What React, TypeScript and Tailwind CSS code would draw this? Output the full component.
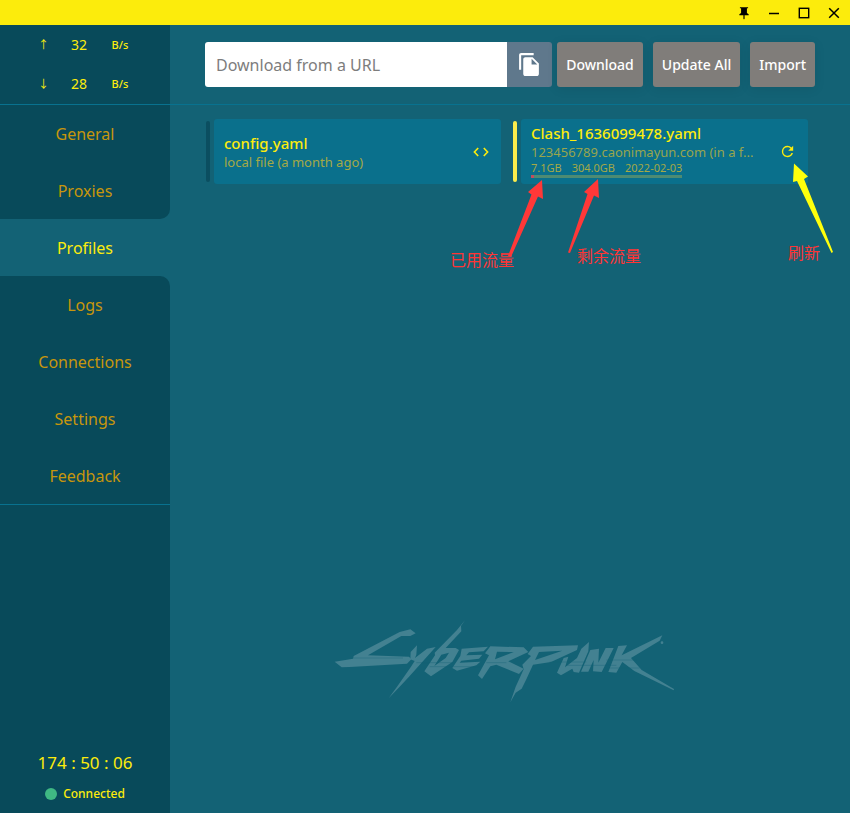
import { useState } from "react";
import type { ReactNode } from "react";
import clsx from "clsx";

const navItems = ["General", "Proxies", "Profiles", "Logs", "Connections", "Settings", "Feedback"];

function TitleBar() {
  return (
    <header className="flex h-[25px] shrink-0 items-center justify-end bg-[#fcec0c] pr-px text-black">
      <button type="button" aria-label="Pin window" className="flex h-full w-[30px] items-center justify-center">
        <svg width="14" height="14" viewBox="0 0 24 24" fill="currentColor" aria-hidden="true">
          <path d="M17 4h2V2H5v2h2v8l-3 2v2h7v6l1 1 1-1v-6h7v-2l-3-2V4z" />
        </svg>
      </button>
      <button type="button" aria-label="Minimize" className="flex h-full w-[30px] items-center justify-center">
        <svg width="12" height="12" viewBox="0 0 12 12" stroke="currentColor" strokeWidth="1.5" aria-hidden="true">
          <path d="M1 6.500h10" />
        </svg>
      </button>
      <button type="button" aria-label="Maximize" className="flex h-full w-[30px] items-center justify-center">
        <svg width="12" height="12" viewBox="0 0 12 12" fill="none" stroke="currentColor" strokeWidth="1.4" aria-hidden="true">
          <rect x="1.3" y="1.3" width="9.4" height="9.4" />
        </svg>
      </button>
      <button type="button" aria-label="Close" className="flex h-full w-[30px] items-center justify-center">
        <svg width="12" height="12" viewBox="0 0 12 12" fill="none" stroke="currentColor" strokeWidth="1.5" aria-hidden="true">
          <path d="M1.200 1.200l9.600 9.600M10.800 1.200l-9.600 9.600" />
        </svg>
      </button>
    </header>
  );
}

function Speed({ arrow, value }: { arrow: string; value: string }) {
  return (
    <div className="flex flex-1 items-center pl-9 text-[#fcec0c]">
      <span className="w-[15px] text-center text-[11px]">{arrow}</span>
      <span className="w-14 text-center text-sm">{value}</span>
      <span className="w-[26px] text-center text-[11px] font-medium">B/s</span>
    </div>
  );
}

function Sidebar({ active, onSelect }: { active: string; onSelect: (name: string) => void }) {
  const activeIndex = navItems.indexOf(active);
  return (
    <aside className="flex w-[170px] shrink-0 flex-col">
      <div className="flex h-20 flex-col border-b border-[#08728f] bg-[#084a5a]">
        <Speed arrow="↑" value="32" />
        <Speed arrow="↓" value="28" />
      </div>
      <nav className="flex flex-col border-b border-[#08728f]">
        {navItems.map((name, i) => (
          <button
            key={name}
            type="button"
            onClick={() => onSelect(name)}
            className={clsx(
              "h-[57px] text-center text-base",
              name === active ? "text-[#fcec0c]" : "bg-[#084a5a] text-[#c7960c]",
              i === activeIndex - 1 && "rounded-br-[10px]",
              i === activeIndex + 1 && "rounded-tr-[10px]",
            )}
          >
            {name}
          </button>
        ))}
      </nav>
      <div className="flex flex-1 flex-col items-center justify-end bg-[#084a5a] pb-[7px] text-[#fcec0c]">
        <div className="text-[17px] leading-9">174 : 50 : 06</div>
        <div className="flex h-[25px] items-center gap-1.5 text-xs font-medium">
          <span className="size-3 rounded-full bg-[#3fb883]" />
          Connected
        </div>
      </div>
    </aside>
  );
}

function ToolButton({ children }: { children: ReactNode }) {
  return (
    <button
      type="button"
      className="h-[45px] whitespace-nowrap rounded-[3px] bg-[#807d7a] px-[9px] text-sm font-medium text-white shadow-[0_2px_12px_rgba(0,0,0,0.08)]"
    >
      {children}
    </button>
  );
}

function Toolbar() {
  return (
    <div className="flex h-20 shrink-0 items-center border-b border-[#08728f] px-[35px]">
      <input
        type="text"
        aria-label="Download from a URL"
        placeholder="Download from a URL"
        className="h-[45px] min-w-0 flex-1 rounded-l-[3px] bg-white px-[11px] text-base text-gray-700 outline-none placeholder:text-[#7d7d7d]"
      />
      <button
        type="button"
        aria-label="Paste URL"
        className="mr-[5px] flex h-[45px] w-[45px] items-center justify-center rounded-r-[3px] bg-[#5f788c] text-white"
      >
        <svg width="25" height="25" viewBox="0 0 24 24" fill="currentColor" aria-hidden="true">
          <path d="M16 1H4c-1.100 0-2 .9-2 2v14h2V3h12V1zm-1 4l6 6v10c0 1.100-.9 2-2 2H7.990C6.890 23 6 22.100 6 21l.01-14c0-1.100.89-2 1.990-2h7zm-1 7h5.500L14 6.500V12z" />
        </svg>
      </button>
      <div className="flex gap-2.5">
        <ToolButton>Download</ToolButton>
        <ToolButton>Update All</ToolButton>
        <ToolButton>Import</ToolButton>
      </div>
    </div>
  );
}

function ProfileCard({ selected, children, action }: { selected?: boolean; children: ReactNode; action: ReactNode }) {
  return (
    <article className="flex min-w-0 items-center gap-1">
      <span className={clsx("h-[61px] w-1 shrink-0 rounded-sm", selected ? "bg-[#fcec4c]" : "bg-[#0b4e60]")} />
      <div className="flex h-[65px] min-w-0 flex-1 items-center justify-between rounded-[3px] bg-[#0a708c] pl-2.5 pr-3">
        <div className={clsx("min-w-0", selected ? "pb-0.5" : "pt-0.5")}>{children}</div>
        {action}
      </div>
    </article>
  );
}

function Profiles() {
  return (
    <div className="grid grid-cols-2 gap-3 pl-9 pr-[42px] pt-3.5">
      <ProfileCard
        action={
          <button type="button" aria-label="Edit config.yaml" className="text-[#fcec0c]">
            <svg width="16" height="16" viewBox="0 0 16 16" fill="none" stroke="currentColor" strokeWidth="1.6" aria-hidden="true">
              <path d="M5.200 4L1.400 8l3.800 4M10.800 4l3.800 4-3.800 4" />
            </svg>
          </button>
        }
      >
        <h2 className="text-[15px] font-medium leading-[19px] text-[#fcec0c]">config.yaml</h2>
        <p className="text-[13px] leading-[18px] text-[#a5a946]">local file (a month ago)</p>
      </ProfileCard>
      <ProfileCard
        selected
        action={
          <button type="button" aria-label="Refresh profile" className="text-[#fcec0c]">
            <svg width="17" height="17" viewBox="0 0 24 24" fill="currentColor" aria-hidden="true">
              <path d="M17.650 6.350A7.960 7.960 0 0 0 12 4a8 8 0 1 0 7.730 10h-2.080A6 6 0 1 1 12 6c1.660 0 3.140.69 4.220 1.780L13 11h7V4l-2.350 2.350z" />
            </svg>
          </button>
        }
      >
        <h2 className="truncate text-[15px] font-medium leading-[19px] text-[#fcec0c]">Clash_1636099478.yaml</h2>
        <p className="whitespace-nowrap text-[13px] leading-[18px] text-[#99a54c]">123456789.caonimayun.com (in a f...</p>
        <div className="w-fit">
          <div className="flex gap-2.5 text-[11px] leading-[14px] text-[#a5a946]">
            <span>7.1GB</span>
            <span>304.0GB</span>
            <span>2022-02-03</span>
          </div>
          <div className="h-[3px] bg-[#4d8b73]">
            <div className="h-full w-[3px] bg-[#c04d60]" />
          </div>
        </div>
      </ProfileCard>
    </div>
  );
}

function Annotations() {
  return (
    <div className="pointer-events-none absolute left-[280px] top-[130px] h-[120px] w-[400px] text-base leading-6 text-[#ff3535]">
      <svg className="absolute left-0 top-0" width="400" height="120" viewBox="450 155 400 120" aria-hidden="true">
        <path fill="#ff3838" d="M542 180L543 199L538 196.500L511 257L508 256L531.500 194.500L528 192Z" />
        <path fill="#ff3838" d="M598 179L599 198L594 195.500L570 253L568 252.500L587.500 194L584 192Z" />
        <path fill="#ffff0c" d="M794 163.500L808 176.500L804 179L833 252L831.500 253L797 181L793 182Z" />
      </svg>
      <span className="absolute left-0 top-[93px]">已用流量</span>
      <span className="absolute left-[127px] top-[89px]">剩余流量</span>
      <span className="absolute left-[338px] top-[86px]">刷新</span>
    </div>
  );
}

function Logo() {
  return (
    <svg width="346" height="90" viewBox="40 20 1038 270" fill="#438191" fillRule="evenodd" role="img" aria-label="Cyberpunk" className="shrink-0">
      <path d="M102 140L240 68L272 60L288 72L272 80L245 80L145 138L268 142L275 150L262 163L90 173L66 174L45 157L100 148Z" />
      <path d="M273 128L292 108L290 136L286 146L322 118L348 113L268 202L240 232L207 267L232 232L274 172L285 155L272 150Z" />
      <path d="M437 31L424 50L425 66L378 116L408 116L418 122L398 158L334 201L314 186L346 138L345 130L412 62ZM365 136L388 130L378 146L344 170Z" />
      <path d="M426 118L505 112L492 126L448 129L440 138L488 136L478 148L425 154L420 160L482 157L470 168L412 184L398 176L422 140Z" />
      <path d="M512 111L612 114L626 128L566 156L612 178L598 194L530 166L512 171L487 209L475 198L508 138L496 132ZM532 127L582 128L526 150Z" />
      <path d="M640 112L775 108L772 122L694 158L640 166L620 210L606 238L588 250L572 279L588 232L612 180L608 166L634 140L624 134ZM658 128L728 124L646 152Z" />
      <path d="M732 146L746 142L736 174L772 146L785 118L808 98L806 126L778 190L762 188L758 178L724 198L712 190Z" />
      <path d="M812 122L838 118L836 160L858 116L882 116L846 188L820 186L822 152L806 187L784 187Z" />
      <path d="M896 110L922 108L906 138L1028 78L1020 94L934 146L966 182L1063 239L1062 243L944 185L908 158L890 190L866 188Z" />
      <circle cx="1027" cy="100" r="4" />
      <path
        d="M100 146H250M290 160H400M330 172H480M500 160H560M690 158H800M740 168H890M860 152H950M870 176H960"
        stroke="#136275"
        strokeWidth="1.5"
        strokeOpacity="0.7"
      />
    </svg>
  );
}

export default function App() {
  const [active, setActive] = useState("Profiles");
  return (
    <div className="flex min-h-screen flex-col bg-[#136275] font-['Noto_Sans','Noto_Sans_CJK_SC',sans-serif]">
      <TitleBar />
      <div className="flex flex-1">
        <Sidebar active={active} onSelect={setActive} />
        <main className="relative flex min-w-0 flex-1 flex-col">
          <Toolbar />
          <Profiles />
          <Annotations />
          <div className="mt-auto flex justify-center pb-[107px] pr-2">
            <Logo />
          </div>
        </main>
      </div>
    </div>
  );
}
